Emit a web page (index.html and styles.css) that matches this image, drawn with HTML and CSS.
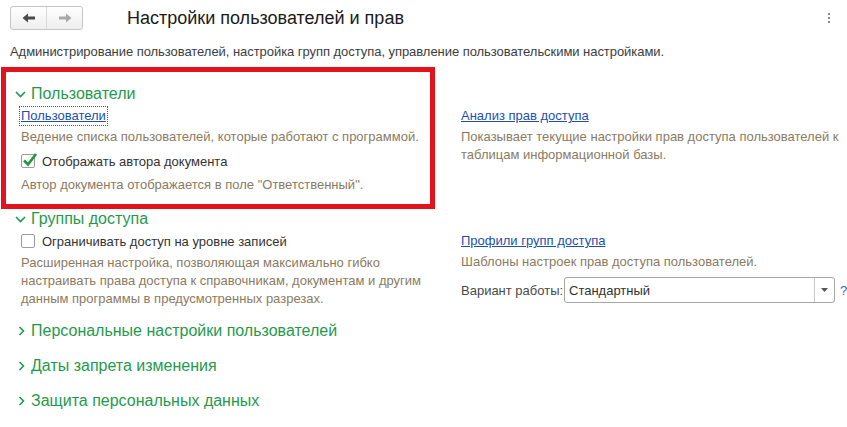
FILE: index.html
```html
<!DOCTYPE html>
<html lang="ru">
<head>
<meta charset="utf-8">
<title>Настройки пользователей и прав</title>
<link rel="stylesheet" href="styles.css">
</head>
<body>
<div class="page">
  <header class="topbar">
    <div class="nav">
      <span class="nav-btn back"><svg width="14" height="10" viewBox="0 0 14 10"><path d="M0.5 5 L6 0.5 V3.5 H13 V6.5 H6 V9.5 Z" fill="#4a4a4a"/></svg></span>
      <span class="nav-btn fwd"><svg width="14" height="10" viewBox="0 0 14 10"><path d="M13.5 5 L8 0.5 V3.5 H1 V6.5 H8 V9.5 Z" fill="#a9a9a9"/></svg></span>
    </div>
    <h1 class="title">Настройки пользователей и прав</h1>
    <div class="kebab"><span></span><span></span><span></span></div>
  </header>

  <p class="subtitle">Администрирование пользователей, настройка групп доступа, управление пользовательскими настройками.</p>

  <section class="group">
    <div class="group-head"><span class="chev"><svg width="11" height="7" viewBox="0 0 11 7"><polyline points="1,1 5.5,5.5 10,1" fill="none" stroke="#1f9a4c" stroke-width="1.6"/></svg></span><span>Пользователи</span></div>
    <div class="group-body">
      <div class="col">
        <div class="link-row"><a class="link focused" href="#">Пользователи</a></div>
        <div class="note">Ведение списка пользователей, которые работают с программой.</div>
        <div class="check-row"><span class="cb"><svg class="tick" width="17" height="16" viewBox="0 0 17 16"><polyline points="3,8.5 7,12.5 15,2" fill="none" stroke="#1e9a3e" stroke-width="2.6"/></svg></span><span>Отображать автора документа</span></div>
        <div class="note gap6">Автор документа отображается в поле "Ответственный".</div>
      </div>
      <div class="col">
        <div class="link-row"><a class="link" href="#">Анализ прав доступа</a></div>
        <div class="note">Показывает текущие настройки прав доступа пользователей к таблицам информационной базы.</div>
      </div>
    </div>
  </section>

  <section class="group">
    <div class="group-head"><span class="chev"><svg width="11" height="7" viewBox="0 0 11 7"><polyline points="1,1 5.5,5.5 10,1" fill="none" stroke="#1f9a4c" stroke-width="1.6"/></svg></span><span>Группы доступа</span></div>
    <div class="group-body">
      <div class="col">
        <div class="check-row first"><span class="cb"></span><span>Ограничивать доступ на уровне записей</span></div>
        <div class="note gap4">Расширенная настройка, позволяющая максимально гибко настраивать права доступа к справочникам, документам и другим данным программы в предусмотренных разрезах.</div>
      </div>
      <div class="col">
        <div class="link-row"><a class="link" href="#">Профили групп доступа</a></div>
        <div class="note gap3">Шаблоны настроек прав доступа пользователей.</div>
        <div class="field-row">
          <span class="field-label">Вариант работы:</span>
          <div class="select"><span class="select-text">Стандартный</span><span class="select-btn"><svg width="7" height="4" viewBox="0 0 7 4"><path d="M0 0 H7 L3.5 4 Z" fill="#555"/></svg></span></div>
          <span class="help">?</span>
        </div>
      </div>
    </div>
  </section>

  <section class="group collapsed">
    <div class="group-head"><span class="chev"><svg width="7" height="10" viewBox="0 0 7 10"><polyline points="1.5,1 5.5,5 1.5,9" fill="none" stroke="#1f9a4c" stroke-width="1.6"/></svg></span><span>Персональные настройки пользователей</span></div>
  </section>
  <section class="group collapsed">
    <div class="group-head"><span class="chev"><svg width="7" height="10" viewBox="0 0 7 10"><polyline points="1.5,1 5.5,5 1.5,9" fill="none" stroke="#1f9a4c" stroke-width="1.6"/></svg></span><span>Даты запрета изменения</span></div>
  </section>
  <section class="group collapsed">
    <div class="group-head"><span class="chev"><svg width="7" height="10" viewBox="0 0 7 10"><polyline points="1.5,1 5.5,5 1.5,9" fill="none" stroke="#1f9a4c" stroke-width="1.6"/></svg></span><span>Защита персональных данных</span></div>
  </section>

  <div class="highlight"></div>
</div>
</body>
</html>
```

FILE: styles.css
```css
* { box-sizing: border-box; }
html, body { margin: 0; padding: 0; background: #fff; }
body {
  font-family: "Liberation Sans", Arial, sans-serif;
  font-size: 13px;
  color: #333;
  width: 847px;
  height: 427px;
  overflow: hidden;
}
.page { position: relative; padding: 0 0 0 10px; }

.topbar {
  height: 36px;
  display: flex;
  align-items: center;
}
.nav {
  display: flex;
  width: 73px;
  height: 24px;
  border: 1px solid #c6c6c6;
  border-radius: 3px;
  background: linear-gradient(#ffffff, #eeeeee);
}
.nav-btn {
  flex: 1;
  display: flex;
  align-items: center;
  justify-content: center;
}
.nav-btn.back { border-right: 1px solid #d8d8d8; }
.title {
  margin: 0 0 0 44px;
  font-size: 18px;
  font-weight: normal;
  color: #1a1a1a;
  flex: 1;
}
.kebab {
  display: flex;
  flex-direction: column;
  gap: 2px;
  margin-right: 17px;
}
.kebab span { width: 2px; height: 2px; background: #8a8a8a; }

.subtitle {
  margin: 8px 0 0 0;
  line-height: 16px;
  color: #3d3d3d;
  letter-spacing: -0.05px;
}

.group { margin-top: 15px; }
.subtitle + .group { margin-top: 24px; }
.group.collapsed { margin-top: 13px; }
.group.collapsed + .group.collapsed { margin-top: 15px; }

.group-head {
  display: flex;
  align-items: center;
  height: 20px;
  font-size: 16px;
  color: #1f9a4c;
}
.chev {
  width: 21px;
  display: flex;
  justify-content: center;
}
.collapsed .chev { padding-left: 1px; }

.group-body {
  display: grid;
  grid-template-columns: 430px 1fr;
  column-gap: 10px;
  padding-left: 11px;
  margin-top: 3px;
}

.link-row { line-height: 18px; }
.link {
  color: #1c4fb0;
  text-decoration: underline;
  display: inline-block;
  line-height: 16px;
}
.link.focused { outline: 1px dotted #555; outline-offset: 1px; }

.note {
  margin-top: 3px;
  line-height: 18px;
  color: #8b7b5f;
}
.note.gap6 { margin-top: 6px; }
.note.gap4 { margin-top: 4px; }
.note.gap3 { margin-top: 3px; }

.check-row {
  margin-top: 6px;
  display: flex;
  align-items: center;
  gap: 7px;
  height: 18px;
  color: #333;
}
.check-row.first { margin-top: 0; }
.cb {
  position: relative;
  width: 14px;
  height: 14px;
  border: 1px solid #9d9d9d;
  border-radius: 2px;
  background: #fff;
}
.tick { position: absolute; left: -1px; top: -3px; }

.field-row {
  margin-top: 6px;
  display: flex;
  align-items: center;
  height: 26px;
}
.field-label { color: #4a4a4a; width: 103px; }
.select {
  width: 271px;
  height: 26px;
  border: 1px solid #a6a6a6;
  border-radius: 3px;
  display: flex;
  align-items: center;
}
.select-text { flex: 1; padding-left: 4px; color: #333; }
.select-btn {
  width: 20px;
  height: 24px;
  border-left: 1px solid #c8c8c8;
  display: flex;
  align-items: center;
  justify-content: center;
}
.help { margin-left: 5px; color: #1c6fc8; }

.highlight {
  position: absolute;
  left: 1px;
  top: 67px;
  width: 434px;
  height: 142px;
  border: 5px solid #e3131d;
  pointer-events: none;
}
```
